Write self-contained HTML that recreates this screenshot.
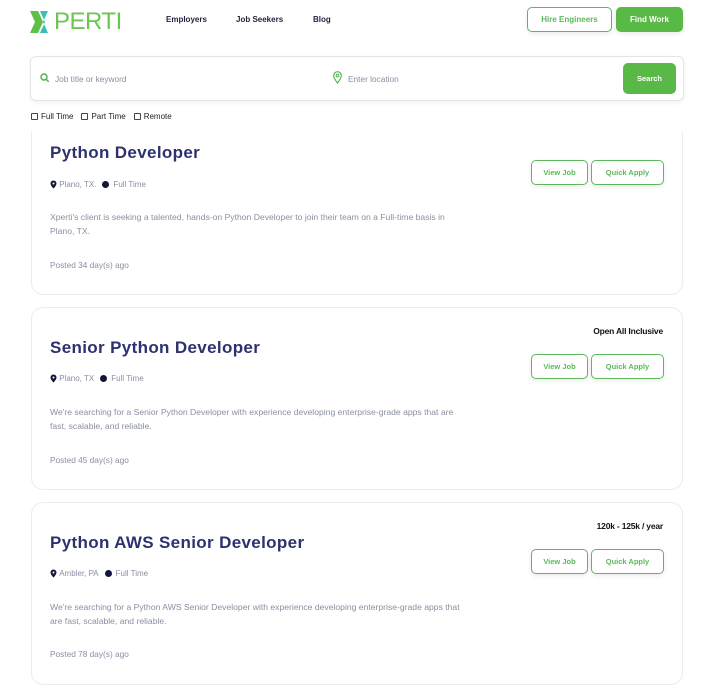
<!DOCTYPE html>
<html><head><meta charset="utf-8"><style>
*{box-sizing:border-box;margin:0;padding:0}
body{width:715px;height:694px;background:#fff;font-family:"Liberation Sans",sans-serif;position:relative;overflow:hidden}
.a{position:absolute}
.nav{font-size:8px;font-weight:bold;color:#1f2340;top:15px}
.btn{position:absolute;border:1px solid #5cb85c;border-radius:5px;color:#5cb85c;font-size:7.5px;font-weight:bold;display:flex;align-items:center;justify-content:center;background:#fff;box-shadow:0 2px 5px rgba(0,0,0,.08)}
.card{position:absolute;left:31px;width:652px;height:183px;border:1px solid #ececec;border-radius:12px;background:#fff}
.title{position:absolute;left:18px;font-size:17px;font-weight:bold;color:#2d3170;letter-spacing:0.35px}
.meta{position:absolute;left:18px;font-size:8px;color:#8a8fa3;display:flex;align-items:center}
.dot{width:7px;height:7px;border-radius:50%;background:#11163a;display:inline-block;margin:0 4px 0 6px}
.desc{position:absolute;left:18px;font-size:8.6px;color:#8a8fa3;line-height:14px;width:418px}
.post{position:absolute;left:18px;font-size:8.3px;color:#8a8fa3}
.sal{position:absolute;right:19px;font-size:8.5px;font-weight:bold;color:#111;letter-spacing:-0.2px}
.cb{display:inline-flex;align-items:center;margin-right:8px}
.cb i{width:7px;height:7px;border:1px solid #444;border-radius:1px;margin-right:3px;display:inline-block}
</style></head><body>

<div class="card" style="top:112px"><div class="title" style="top:30px">Python Developer</div>
<div class="meta" style="top:67px"><svg width="7" height="9" viewBox="0 0 7 9"><path d="M3.5 0.5a3 3 0 0 0-3 3c0 2 3 5 3 5s3-3 3-5a3 3 0 0 0-3-3z" fill="#11163a"/><circle cx="3.5" cy="3.5" r="1" fill="#fff"/></svg>&nbsp;Plano, TX.<span class="dot"></span>Full Time</div>
<div class="desc" style="top:97px">Xperti's client is seeking a talented, hands-on Python Developer to join their team on a Full-time basis in Plano, TX.</div>
<div class="post" style="top:147px">Posted 34 day(s) ago</div>
<div class="btn" style="left:499px;top:47px;width:57px;height:25px">View Job</div>
<div class="btn" style="left:559px;top:47px;width:73px;height:25px">Quick Apply</div></div>

<div class="a" style="left:0;top:0;width:715px;height:131px;background:#fff"></div>

<div class="a" style="left:30px;top:8px;font-size:24px;color:#6cc551;display:flex;align-items:center"><svg width="24" height="22" viewBox="0 0 24 22"><path d="M0 0h8l5 11-5 11H0l5-11z" fill="#5fbf46"/><path d="M10 0h8l-5 11 5 11h-8l5-11z" fill="#3bbfb0"/></svg><span style="font-weight:normal;letter-spacing:-0.5px">PERTI</span></div>
<div class="a nav" style="left:166px">Employers</div>
<div class="a nav" style="left:236px">Job Seekers</div>
<div class="a nav" style="left:313px">Blog</div>
<div class="btn" style="left:527px;top:7px;width:85px;height:25px;font-size:8px">Hire Engineers</div>
<div class="btn" style="left:616px;top:7px;width:67px;height:25px;background:#58b947;color:#fff;border-color:#58b947;font-size:8px">Find Work</div>

<div class="a" style="left:30px;top:56px;width:654px;height:45px;border:1px solid #e4e4e4;border-radius:6px;box-shadow:0 2px 6px rgba(0,0,0,.05)"></div>
<svg class="a" style="left:40px;top:73px" width="10" height="10" viewBox="0 0 10 10"><circle cx="4" cy="4" r="3" fill="none" stroke="#4caf50" stroke-width="1.4"/><path d="M6.2 6.2l2.5 2.5" stroke="#4caf50" stroke-width="1.4"/></svg>
<div class="a" style="left:55px;top:74px;font-size:8.3px;color:#8a8fa3">Job title or keyword</div>
<svg class="a" style="left:333px;top:71px" width="9" height="13" viewBox="0 0 9 13"><path d="M4.5 0.7a3.8 3.8 0 0 0-3.8 3.8c0 2.8 3.8 7.5 3.8 7.5s3.8-4.7 3.8-7.5a3.8 3.8 0 0 0-3.8-3.8z" fill="none" stroke="#4caf50" stroke-width="1.1"/><circle cx="4.5" cy="4.5" r="1.4" fill="none" stroke="#4caf50" stroke-width="1"/></svg>
<div class="a" style="left:348px;top:74px;font-size:8.3px;color:#8a8fa3">Enter location</div>
<div class="btn" style="left:623px;top:63px;width:53px;height:31px;background:#58b947;color:#fff;border-color:#58b947;box-shadow:none">Search</div>

<div class="a" style="left:31px;top:112px;font-size:8px;color:#222;display:flex"><span class="cb"><i></i>Full Time</span><span class="cb"><i></i>Part Time</span><span class="cb"><i></i>Remote</span></div>

<div class="card" style="top:307px"><div class="sal" style="top:18px">Open All Inclusive</div><div class="title" style="top:30px">Senior Python Developer</div>
<div class="meta" style="top:66px"><svg width="7" height="9" viewBox="0 0 7 9"><path d="M3.5 0.5a3 3 0 0 0-3 3c0 2 3 5 3 5s3-3 3-5a3 3 0 0 0-3-3z" fill="#11163a"/><circle cx="3.5" cy="3.5" r="1" fill="#fff"/></svg>&nbsp;Plano, TX<span class="dot"></span>Full Time</div>
<div class="desc" style="top:97px">We're searching for a Senior Python Developer with experience developing enterprise-grade apps that are fast, scalable, and reliable.</div>
<div class="post" style="top:147px">Posted 45 day(s) ago</div>
<div class="btn" style="left:499px;top:46px;width:57px;height:25px">View Job</div>
<div class="btn" style="left:559px;top:46px;width:73px;height:25px">Quick Apply</div></div>

<div class="card" style="top:502px"><div class="sal" style="top:18px">120k - 125k / year</div><div class="title" style="top:30px">Python AWS Senior Developer</div>
<div class="meta" style="top:66px"><svg width="7" height="9" viewBox="0 0 7 9"><path d="M3.5 0.5a3 3 0 0 0-3 3c0 2 3 5 3 5s3-3 3-5a3 3 0 0 0-3-3z" fill="#11163a"/><circle cx="3.5" cy="3.5" r="1" fill="#fff"/></svg>&nbsp;Ambler, PA<span class="dot"></span>Full Time</div>
<div class="desc" style="top:97px">We're searching for a Python AWS Senior Developer with experience developing enterprise-grade apps that are fast, scalable, and reliable.</div>
<div class="post" style="top:146px">Posted 78 day(s) ago</div>
<div class="btn" style="left:499px;top:46px;width:57px;height:25px">View Job</div>
<div class="btn" style="left:559px;top:46px;width:73px;height:25px">Quick Apply</div></div>
</body></html>
